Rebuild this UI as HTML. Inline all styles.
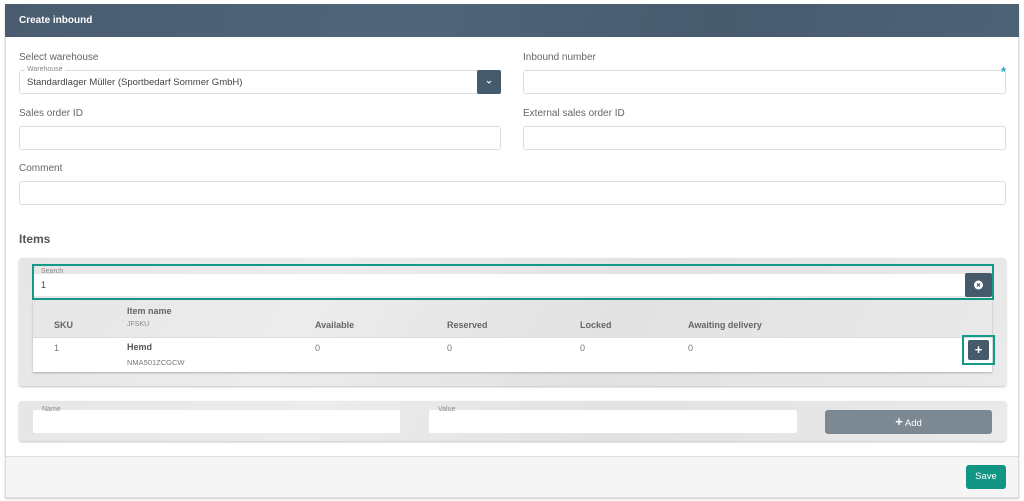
<!DOCTYPE html>
<html><head><meta charset="utf-8"><style>
*{box-sizing:border-box;margin:0;padding:0}
body{width:1024px;height:501px;background:#fff;font-family:"Liberation Sans",sans-serif;position:relative;overflow:hidden;color:#555}
.a{position:absolute}
.card{left:5px;top:4px;width:1014px;height:494px;border:1px solid #ddd;box-shadow:0 1px 2px rgba(0,0,0,.2);background:#fff}
.hdr{left:5px;top:4px;width:1014px;height:33px;background:linear-gradient(100deg,#4a5d70,#506579 40%,#485b6e 70%,#4e6276);color:#fff;font-weight:bold;font-size:10px;padding:11px 14px}
.lbl{font-size:10px;color:#666}
.inp{background:#fff;border:1px solid #ddd;border-radius:3px;height:24px}
.fl{font-size:7px;color:#888;background:#fff;padding:0 2px}
.panel{background:linear-gradient(120deg,#e6e6e6,#ececec 30%,#e2e2e2 60%,#eaeaea);border-radius:3px;box-shadow:0 1px 2px rgba(0,0,0,.25)}
.btn{background:#455a6b;border-radius:2px;color:#fff;text-align:center}
.th{font-size:9px;font-weight:bold;color:#666}
.td{font-size:9px;color:#777}
</style></head><body>
<div class="a card"></div>
<div class="a hdr">Create inbound</div>
<div class="a lbl" style="left:19px;top:52px">Select warehouse</div>
<div class="a inp" style="left:19px;top:70px;width:482px"></div>
<div class="a fl" style="left:25px;top:66px">Warehouse</div>
<div class="a" style="left:27px;top:77px;font-size:9.5px;color:#444">Standardlager Müller (Sportbedarf Sommer GmbH)</div>
<div class="a btn" style="left:477px;top:70px;width:24px;height:24px"><svg width="24" height="24"><path d="M10 11l2 2 2-2" stroke="#fff" stroke-width="1" fill="none"/></svg></div>
<div class="a lbl" style="left:523px;top:52px">Inbound number</div>
<div class="a inp" style="left:523px;top:70px;width:483px"></div>
<div class="a" style="left:1001px;top:64px;color:#2aa6c4;font-size:13px;font-weight:bold">*</div>
<div class="a lbl" style="left:19px;top:108px">Sales order ID</div>
<div class="a inp" style="left:19px;top:126px;width:482px"></div>
<div class="a lbl" style="left:523px;top:108px">External sales order ID</div>
<div class="a inp" style="left:523px;top:126px;width:483px"></div>
<div class="a lbl" style="left:19px;top:163px">Comment</div>
<div class="a inp" style="left:19px;top:181px;width:987px"></div>
<div class="a" style="left:19px;top:232px;font-size:12px;font-weight:bold;color:#555">Items</div>
<div class="a panel" style="left:19px;top:258px;width:987px;height:128px"></div>
<div class="a" style="left:32px;top:264px;width:962px;height:36px;border:2px solid #139a87"></div>
<div class="a" style="left:34px;top:274px;width:931px;height:22px;background:#fff"></div>
<div class="a fl" style="left:39px;top:268px;background:none">Search</div>
<div class="a" style="left:41px;top:280px;font-size:9px;color:#444">1</div>
<div class="a btn" style="left:965px;top:273px;width:27px;height:24px"><svg width="27" height="24"><circle cx="13.5" cy="12" r="4.5" fill="#fff"/><path d="M12 10.5l3 3M15 10.5l-3 3" stroke="#455a6b" stroke-width="1.2"/></svg></div>
<div class="a" style="left:33px;top:300px;width:959px;height:72px;box-shadow:0 1px 2px rgba(0,0,0,.25)"></div>
<div class="a" style="left:33px;top:337px;width:959px;height:35px;background:#fff;border-top:1px solid #ddd"></div>
<div class="a th" style="left:54px;top:320px">SKU</div>
<div class="a th" style="left:127px;top:306px">Item name</div>
<div class="a" style="left:127px;top:321px;font-size:7px;color:#888">JFSKU</div>
<div class="a th" style="left:315px;top:320px">Available</div>
<div class="a th" style="left:447px;top:320px">Reserved</div>
<div class="a th" style="left:580px;top:320px">Locked</div>
<div class="a th" style="left:688px;top:320px">Awaiting delivery</div>
<div class="a td" style="left:54px;top:343px">1</div>
<div class="a th" style="left:127px;top:342px;color:#555">Hemd</div>
<div class="a" style="left:127px;top:358px;font-size:7.5px;color:#777">NMA501ZCGCW</div>
<div class="a td" style="left:315px;top:343px">0</div>
<div class="a td" style="left:447px;top:343px">0</div>
<div class="a td" style="left:580px;top:343px">0</div>
<div class="a td" style="left:688px;top:343px">0</div>
<div class="a" style="left:962px;top:335px;width:33px;height:30px;border:2px solid #139a87"></div>
<div class="a btn" style="left:968px;top:340px;width:21px;height:20px;font-size:13px;font-weight:bold;line-height:20px">+</div>
<div class="a panel" style="left:19px;top:401px;width:987px;height:40px"></div>
<div class="a" style="left:33px;top:410px;width:367px;height:23px;background:#fff;border-radius:2px"></div>
<div class="a fl" style="left:40px;top:406px;background:none">Name</div>
<div class="a" style="left:429px;top:410px;width:368px;height:23px;background:#fff;border-radius:2px"></div>
<div class="a fl" style="left:436px;top:406px;background:none">Value</div>
<div class="a" style="left:825px;top:410px;width:167px;height:24px;background:#7c8993;border-radius:3px;color:#fff;font-size:9.5px;text-align:center;line-height:24px"><b style="font-size:13px">+</b> Add</div>
<div class="a" style="left:6px;top:456px;width:1012px;height:41px;background:#f5f5f5;border-top:1px solid #ddd"></div>
<div class="a" style="left:966px;top:465px;width:40px;height:24px;background:#129683;border-radius:3px;color:#fff;font-size:9.5px;text-align:center;line-height:24px">Save</div>
</body></html>
